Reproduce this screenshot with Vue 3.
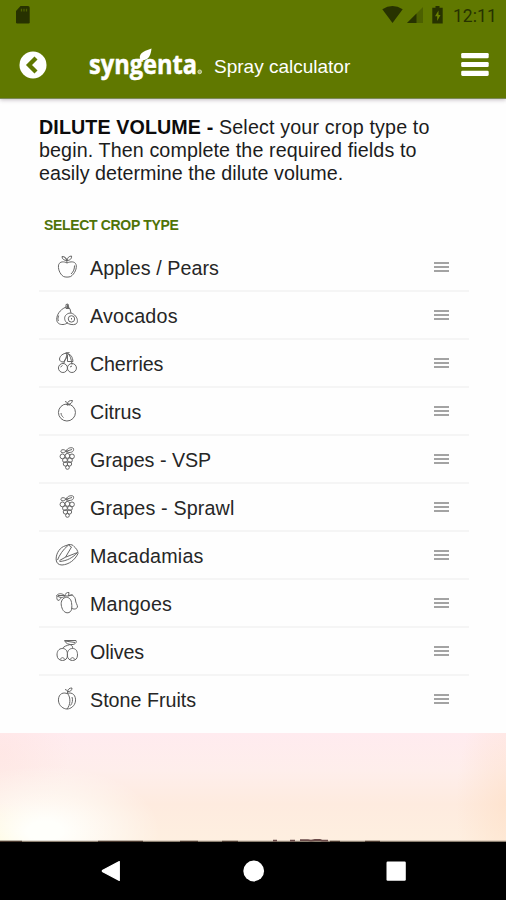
<script setup>
const crops = [
  { name: 'Apples / Pears', icon: 'apple', spacing: 0.07 },
  { name: 'Avocados', icon: 'avocado', spacing: 0.2 },
  { name: 'Cherries', icon: 'cherry', spacing: -0.15 },
  { name: 'Citrus', icon: 'citrus', spacing: 0 },
  { name: 'Grapes - VSP', icon: 'grapes', spacing: -0.02 },
  { name: 'Grapes - Sprawl', icon: 'grapes', spacing: 0.15 },
  { name: 'Macadamias', icon: 'macadamia', spacing: 0.2 },
  { name: 'Mangoes', icon: 'mango', spacing: 0.15 },
  { name: 'Olives', icon: 'olive', spacing: -0.1 },
  { name: 'Stone Fruits', icon: 'stone', spacing: 0 },
]

const icons = {
  apple: [
    'M12 8C9 6.300 5 6.300 3.700 9.500 2.700 13 4.500 19 8.500 21.500c1.700.8 5.300.8 7.200 0C19.700 19 22.300 13 21 9.500 20 6.300 15.500 6.300 12 8Z',
    'M12 8C12 5 11 3.500 9.500 2.500M12 5.500C12.500 2.500 14 1.200 16.500 1 17 3.500 15 5.500 12 5.500M7 1.500C7 4 9 5.500 12 5.500 11.500 3 10 1.500 7 1.500ZM19.500 10.500c0 3.500-.8 6-3.500 8.500',
  ],
  avocado: [
    'M10 4.500C5 7 1.700 11.500 1.700 16.500c0 3.500 3 5.300 6.300 5 2 0 3.500-1 5-2',
    'M10 4.500c1.500-1 4-.5 5 1.500l1 4',
    'M11.500 11.500c3-2.500 6.500-1.500 9 1.500 2.500 3 2.500 6.500.5 8-3 1.300-7 .5-9.500-1.500-2.500-2.500-2.500-6 0-8Z',
    'M16.500 12.700a3.200 3.200 0 1 1-.1 6.400 3.200 3.200 0 0 1 .1-6.400ZM16.500 15v1.500',
    'M11 5.500V1.500l2-.5 1 4.500h-3M12.500 1.500V5M3.700 12.500c-.8 2-1 4-.3 5.500',
  ],
  cherry: [
    'M8 12.500a4.500 4.500 0 1 1-.1 9A4.500 4.500 0 0 1 8 12.500Z',
    'M17 12.500a4.500 4.500 0 1 1-.1 9 4.500 4.500 0 0 1 .1-9Z',
    'M12 2C8 2.500 5 4.500 4.500 8c0 2 1.500 3 4 3l3.500-5ZM12 1.500C12 6 10 9 8.500 13M12 1.500c3 2.500 4.500 6.500 5 12M13 3c3 .5 4.500 3 5 7.500h-5.500V4M9.500 2.500l5-1M5.500 16l2-1.500M15 16l2-1',
  ],
  citrus: [
    'M12 5a8.500 8.500 0 1 1-.1 17A8.500 8.500 0 0 1 12 5Z',
    'M12.500 6.500C13 4 12 3 10 2.500M12.500 5c0-2.500 2-3.800 5-3.500-.5 2.500-2 4-5 3.500M11 5.500l4 .5M6 14c.2 2 1 3.300 2.500 4.500',
  ],
  grapes: [
    'M11 4.200c-2-2.700-6-1.500-5 .8 1 1.500 4 .5 5-.8Zm0 0C12.500 .500 17 0 18.500 1.500 19 4 17.500 5.500 14 5.500L11 4.200ZM12 4l5-1.500M12 4v3',
    'M7.500 7a2.400 2.400 0 1 1-.1 4.800A2.400 2.400 0 0 1 7.500 7ZM12.500 6.500a2.400 2.400 0 1 1-.1 4.800 2.400 2.400 0 0 1 .1-4.800ZM17 7a2.400 2.400 0 1 1-.1 4.800A2.400 2.400 0 0 1 17 7Z',
    'M10 10.800a2.400 2.400 0 1 1-.1 4.800 2.400 2.400 0 0 1 .1-4.800ZM15 10.800a2.400 2.400 0 1 1-.1 4.800 2.400 2.400 0 0 1 .1-4.800ZM10.500 14.700a2.200 2.200 0 1 1-.1 4.400 2.200 2.200 0 0 1 .1-4.400ZM14.500 14.700a2.200 2.200 0 1 1-.1 4.400 2.200 2.200 0 0 1 .1-4.400ZM12.500 18.500a1.900 1.900 0 1 1-.1 3.800 1.900 1.900 0 0 1 .1-3.800Z',
  ],
  macadamia: [
    'M1.200 17C.700 12 3.500 6 8.500 3.500L14 1.500c2.500 0 4 .5 5 2 2.500 2 4 4.500 4 7-3 6.500-9 11-16 11.500C3.500 22 1.500 20 1.200 17Z',
    'M2.500 17C4.500 12 8 6.500 13.500 2M16.500 4 10.500 14.200 22.500 9.500C18 14.500 12 18 4.500 18.500M10.500 14.200 4.500 17.500M13.500 2l3 2',
  ],
  mango: [
    'M9 7c-3 2-3.500 6-2 10 1.300 4 4.500 5.500 7 4.500 3.500-1.500 3-6 2.500-10C16 7.500 12.500 5 9 7Z',
    'M14 4.500c3-1 6 .5 6.500 4.500 0 3 2 4.500 2 7-1 2.500-4 2.500-6.500 1',
    'M10 5C7 2 4 2 1.500 4.500 5 7 8 7 10 5ZM3 4.500h7M10 5C10 2.500 12 1 14 1.500L13.500 5H10ZM2 5c-.5 2 0 4 1 4.500C5 9 6 7.500 6 6.500M13.500 5l4-1.500',
  ],
  olive: [
    'M7.500 9.500C3.500 9.500 2 12.500 2 16c0 3.500 2.500 5.500 5.500 5.500s5-2 5-5.500c0-4-1.500-6.500-5-6.500Z',
    'M17.500 9.500c-3.500 0-5.200 2.500-5.200 6.500 0 3.500 2.200 5.500 5.200 5.500s5-2 5-5.500c0-4-1.500-6.500-5-6.500Z',
    'M7.500 9.500C9 7 11 7 15 5.500M17.500 9.500c.5-2-.5-3-2.500-4M9.500 1.500 21 1.500C22 3 20.500 5 18 5.500 14 6 10.500 4.500 9.500 1.500ZM10 2l10 1.500M5.500 20.500c.5-2.500 3.500-2.500 4 0M15.500 20.500c.5-2.500 3.500-2.500 4 0',
  ],
  stone: [
    'M12 6.500C6 4.500 3 9 3.500 14c.5 5 5 8 8.500 8s8-3 8.500-8-2.500-9.500-8.500-7.500Z',
    'M12.500 6.500c3.500 4 3 11.500-.5 15.500M12.500 6.500C13 4 12 3 10 2.500M12.500 4.500c.5-2.500 2-3.500 4.500-3.500 0 2.500-2 4-4.500 3.500M17 10c1 3 .5 6-1.500 8.500',
  ],
}
</script>

<template>
  <div class="screen">
    <header class="top">
      <div class="status">
        <svg class="sd" width="16" height="20" viewBox="0 0 16 20">
          <path d="M5.500 1H13q1.700 0 1.700 1.700v14.600q0 1.200-1.200 1.200H2.200Q1 18.500 1 17.300V6Z" fill="#273200" />
          <path d="M6.500 3.800v2.700M9 3.800v2.700M11.500 3.800v2.700" stroke="#4d6100" stroke-width="1.300" />
        </svg>
        <div class="indicators">
          <svg width="64" height="20" viewBox="0 0 64 20">
            <path d="M.300 4.300Q10.500 -2.500 20.700 4.300L10.500 18Z" fill="#273200" />
            <path d="M41 2V18H25Z" fill="#4c6000" />
            <path d="M34.500 8.500V18H25Z" fill="#273200" />
            <path d="M53.500 1h4v1.800h3.200V18.500H50.300V2.800h3.200Z" fill="#273200" />
            <path d="M56.500 5.500 53 11.300h2.200V16l3.300-6h-2Z" fill="#6b8200" />
          </svg>
          <span class="clock">12:11</span>
        </div>
      </div>
      <div class="bar">
        <svg class="back" width="28" height="28" viewBox="0 0 28 28">
          <circle cx="14" cy="14" r="13.500" fill="#fff" />
          <path d="M17 7 10 14l7 7" fill="none" stroke="#607800" stroke-width="4.300" />
        </svg>
        <svg class="logo" width="116" height="36" viewBox="0 0 116 36">
          <text class="word" x="0" y="24.500" textLength="108" lengthAdjust="spacingAndGlyphs">syngenta</text>
          <path d="M51.500 11C49 5.500 53 2.500 62.500 -.500 61.800 6.500 59.500 12 51.500 11Z" fill="#fff" />
          <circle cx="110.700" cy="22.800" r="1.900" fill="#a7b56f" stroke="#e6ebd5" stroke-width=".7" />
        </svg>
        <span class="title">Spray calculator</span>
        <svg class="menu" width="30" height="26" viewBox="0 0 30 26">
          <rect x="1.200" y="1" width="27.500" height="5.200" rx="1.300" fill="#fff" />
          <rect x="1.200" y="9.900" width="27.500" height="5.200" rx="1.300" fill="#fff" />
          <rect x="1.200" y="18.700" width="27.500" height="5.200" rx="1.300" fill="#fff" />
        </svg>
      </div>
    </header>

    <main class="sheet">
      <p class="intro">
        <span class="line l1"><b>DILUTE VOLUME -</b> Select your crop type to</span>
        <span class="line l2">begin. Then complete the required fields to</span>
        <span class="line l3">easily determine the dilute volume.</span>
      </p>
      <h2 class="heading">SELECT CROP TYPE</h2>
      <ul class="list">
        <li v-for="crop in crops" :key="crop.name" class="row">
          <svg class="fruit" width="24" height="24" viewBox="0 0 24 24">
            <path v-for="(d, i) in icons[crop.icon]" :key="i" :d="d" />
          </svg>
          <span class="name" :style="{ letterSpacing: crop.spacing + 'px' }">{{ crop.name }}</span>
          <span class="grip"><i></i><i></i><i></i></span>
        </li>
      </ul>
    </main>

    <div class="sky">
      <svg class="horizon" width="506" height="4" viewBox="0 0 506 4">
        <path d="M0 2.800h506v1.200H0Z" fill="#8b7f70" />
        <path d="M0 3.300h22M98 3.300h45M180 3.300h18M222 3.300h16M330 3.300h10M365 3.300h15" stroke="#3a2a20" stroke-width="1" />
        <path d="M273 2.600h4M290 2.600h5M300 2.200h8l3 .4 4-.6h5l2 .6h6" fill="none" stroke="#6a4a48" stroke-width="1.800" />
      </svg>
    </div>

    <nav class="nav">
      <svg width="506" height="58" viewBox="0 0 506 58">
        <path d="M119.300 19.600v18.800L102.800 29.800q-1-.8 0-1.600Z" fill="#fff" stroke="#fff" stroke-width="1.200" stroke-linejoin="round" />
        <circle cx="253.700" cy="29" r="10.400" fill="#fff" />
        <rect x="386.500" y="19.500" width="19.300" height="19.300" rx="1.200" fill="#fff" />
      </svg>
    </nav>
  </div>
</template>

<style>
body {
  margin: 0;
  background: #fff;
}
</style>

<style scoped>
.screen {
  display: flex;
  flex-direction: column;
  width: 506px;
  height: 900px;
  overflow: hidden;
  background: #fefefe;
  font-family: "Liberation Sans", Arial, sans-serif;
  color: #1c1c1c;
}
.top {
  flex: none;
  height: 98px;
  background: #607800;
  border-bottom: 1px solid #7b8858;
  box-shadow: 0 1px 4px rgba(60, 40, 60, 0.3);
  box-sizing: content-box;
}
.status {
  display: flex;
  justify-content: space-between;
  height: 32px;
  padding: 5px 9px 0 15px;
  box-sizing: border-box;
}
.indicators {
  display: flex;
  gap: 7px;
}
.clock {
  font-family: Roboto, sans-serif;
  font-size: 17.5px;
  line-height: 22px;
  letter-spacing: 0.1px;
  color: #273200;
}
.bar {
  display: flex;
  align-items: flex-start;
  height: 66px;
  padding: 0 16px 0 19px;
}
.back {
  margin-top: 19px;
}
.logo {
  margin: 17px 0 0 42px;
  overflow: visible;
}
.word {
  font-family: "Open Sans", "Noto Sans", sans-serif;
  font-weight: 700;
  font-size: 27px;
  fill: #fff;
  stroke: #fff;
  stroke-width: 0.5px;
}
.title {
  margin: 22px 0 0 9px;
  font-size: 19px;
  line-height: 26px;
  color: #fff;
  white-space: nowrap;
}
.menu {
  margin: 20px 0 0 auto;
}
.sheet {
  flex: none;
  height: 634px;
  box-sizing: border-box;
  padding: 17px 37px 0 39px;
}
.intro {
  margin: 0;
  font-size: 19.7px;
  line-height: 23px;
}
.line {
  display: block;
  white-space: nowrap;
}
.l1 {
  letter-spacing: 0.16px;
}
.l2 {
  letter-spacing: 0.11px;
}
.l3 {
  letter-spacing: 0.03px;
}
.intro b {
  color: #0c0c0c;
  letter-spacing: 0.1px;
}
.heading {
  margin: 31px 0 0 5px;
  height: 18px;
  font-size: 14px;
  line-height: 18px;
  font-weight: 700;
  letter-spacing: -0.33px;
  color: #4f7308;
  white-space: nowrap;
}
.list {
  margin: 10px 0 0;
  padding: 0;
  list-style: none;
}
.row {
  display: flex;
  align-items: center;
  height: 48px;
  box-sizing: border-box;
  padding: 0 20px 0 16px;
  border-bottom: 2px solid #f5f5f5;
}
.row:last-child {
  border-bottom-color: transparent;
}
.fruit {
  flex: none;
  fill: none;
  stroke: #666;
  stroke-width: 1;
  stroke-linejoin: round;
}
.name {
  margin-left: 11px;
  padding-top: 1px;
  font-size: 19.7px;
  line-height: 24px;
  color: #262626;
  white-space: nowrap;
}
.grip {
  display: flex;
  flex-direction: column;
  gap: 2px;
  width: 15px;
  margin-left: auto;
}
.grip i {
  height: 2px;
  background: #a3a3a3;
}
.sky {
  display: flex;
  align-items: flex-end;
  flex: none;
  height: 109px;
  background:
    radial-gradient(ellipse 115px 65px at 45px 98px, #fffffb 15%, rgba(255, 255, 245, 0) 100%),
    radial-gradient(ellipse 60px 40px at 0 110px, #fff6bd, rgba(255, 250, 210, 0)),
    radial-gradient(ellipse 50px 110px at 506px 70px, rgba(255, 220, 192, 0.5), rgba(255, 225, 200, 0)),
    radial-gradient(ellipse 70px 70px at 0 20px, rgba(255, 226, 222, 0.5), rgba(255, 225, 220, 0)),
    linear-gradient(#ffebef, #feeeeb 35%, #feebdf 65%, #feefe0);
}
.horizon {
  display: block;
}
.nav {
  flex: none;
  height: 58px;
  background: #000;
}
.nav svg {
  display: block;
}
</style>
